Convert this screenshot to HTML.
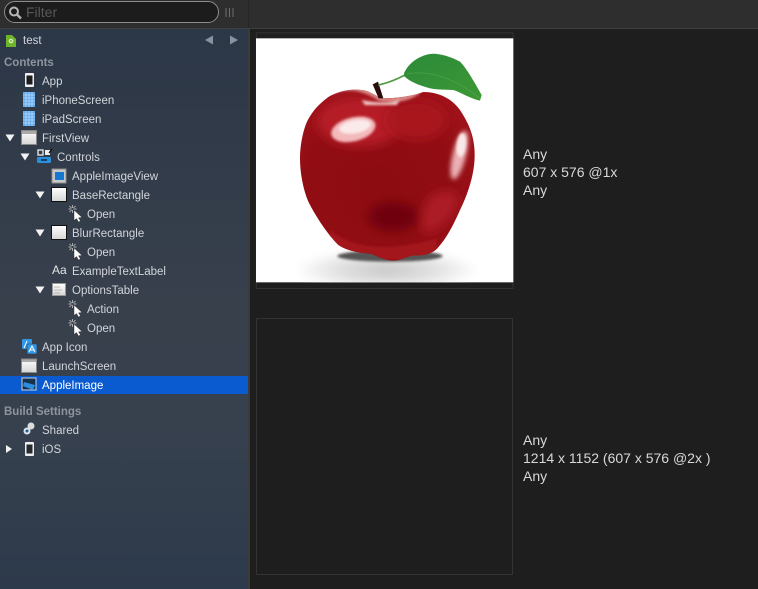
<!DOCTYPE html>
<html><head><meta charset="utf-8"><style>
html,body{margin:0;padding:0;background:#1e1e1e}
#p{position:relative;width:758px;height:589px;overflow:hidden;background:#1e1e1e;font-family:"Liberation Sans",sans-serif}
#p>*{position:absolute}
.l{font-size:11.5px;line-height:19px;height:19px;margin-top:1px;color:#d2d5da;white-space:nowrap}
.h{font-size:11.5px;font-weight:bold;line-height:16px;margin-top:1px;color:#8d949d;white-space:nowrap;left:4px}
.t{font-size:14px;line-height:18px;color:#d8d8d8;left:523px;white-space:nowrap}
</style></head><body><div id="p">
<div style="left:0;top:29px;width:248px;height:560px;background:linear-gradient(#2c3747,#38404c 50%,#37414e 70%,#2d3a4b)"></div>
<div style="left:248px;top:29px;width:2px;height:560px;background:#3b3b3b"></div>
<div style="left:0;top:0;width:758px;height:28px;background:#2e2e2e"></div>
<div style="left:0;top:28px;width:758px;height:1px;background:#3c3f44"></div>
<div style="left:248px;top:0;width:1px;height:28px;background:#262626"></div>
<div style="left:4px;top:1px;width:213px;height:20px;border:1.5px solid #8c8c8c;border-radius:11px;background:#1c1c1c"></div>
<div style="left:26px;top:3px;font-size:14px;line-height:18px;color:#585858">Filter</div>
<div style="left:0;top:376px;width:248px;height:18px;background:#0a5bd0"></div>

<div class="l" style="left:23px;top:31px">test</div>
<div class="h" style="top:54px">Contents</div>
<div class="l" style="left:42px;top:72px">App</div>
<div class="l" style="left:42px;top:91px">iPhoneScreen</div>
<div class="l" style="left:42px;top:110px">iPadScreen</div>
<div class="l" style="left:42px;top:129px">FirstView</div>
<div class="l" style="left:57px;top:148px">Controls</div>
<div class="l" style="left:72px;top:167px">AppleImageView</div>
<div class="l" style="left:72px;top:186px">BaseRectangle</div>
<div class="l" style="left:87px;top:205px">Open</div>
<div class="l" style="left:72px;top:224px">BlurRectangle</div>
<div class="l" style="left:87px;top:243px">Open</div>
<div class="l" style="left:72px;top:262px">ExampleTextLabel</div>
<div class="l" style="left:72px;top:281px">OptionsTable</div>
<div class="l" style="left:87px;top:300px">Action</div>
<div class="l" style="left:87px;top:319px">Open</div>
<div class="l" style="left:42px;top:338px">App Icon</div>
<div class="l" style="left:42px;top:357px">LaunchScreen</div>
<div class="l" style="left:42px;top:376px;color:#fff">AppleImage</div>
<div class="h" style="top:403px">Build Settings</div>
<div class="l" style="left:42px;top:421px">Shared</div>
<div class="l" style="left:42px;top:440px">iOS</div>
<div style="left:52px;top:261px;font-size:12px;line-height:18px;color:#e4e4e4">Aa</div>

<svg width="250" height="470" viewBox="0 0 250 470" style="left:0;top:0">
<defs><g id="cur"><g stroke="#d8d8d8" stroke-width=".7"><path d="M0-4V-1M0 4V1M-4 0H-1M4 0H1M-3-3L-1-1M3-3L1-1M-3 3L-1 1"/></g><path d="M1.500 1L1.500 11.500L4 9.500L6 13L8 12L6 8.800L9.500 8.500Z" fill="#fff" stroke="#222" stroke-width=".4"/></g>
<linearGradient id="w" x1="0" y1="0" x2="0" y2="1"><stop offset="0" stop-color="#fff"/><stop offset="1" stop-color="#d5d5d5"/></linearGradient>
<g id="tri"><path d="M-4.500-3.500H4.500L0 3.500Z" fill="#f2f2f2"/></g></defs>
<circle cx="14" cy="11.500" r="4" fill="none" stroke="#b5b5b5" stroke-width="2"/>
<path d="M17 14.500L21 18.500" stroke="#b5b5b5" stroke-width="2.400"/>
<path d="M226 8V17M229.500 8V17M233 8V17" stroke="#6f6f6f" stroke-width="1"/>
<path d="M6 35H12L16 39V47H6Z" fill="#6fb52c"/><circle cx="11" cy="41" r="2.300" fill="#d8ecc0"/><circle cx="11" cy="41" r="1" fill="#6fb52c"/>
<path d="M213 35.500V44.500L205 40Z" fill="#8a93a0"/><path d="M230 35.500V44.500L238 40Z" fill="#8a93a0"/>
<rect x="25" y="73" width="9" height="14" rx="1" fill="#f0f0f0"/><rect x="26.500" y="75.500" width="6" height="9" fill="#1d1d1d"/>
<g fill="#5ea9ee"><rect x="23" y="92" width="12" height="15"/><rect x="23" y="111" width="12" height="15"/></g>
<path d="M26 92V107M29 92V107M32 92V107M23 95H35M23 98H35M23 101H35M23 104H35M26 111V126M29 111V126M32 111V126M23 114H35M23 117H35M23 120H35M23 123H35" stroke="#b6d8f8" stroke-width=".8"/>
<use href="#tri" x="10" y="138"/><use href="#tri" x="25" y="157"/><use href="#tri" x="40" y="195"/><use href="#tri" x="40" y="233"/><use href="#tri" x="40" y="290"/>
<rect x="21.500" y="130.500" width="15" height="14" fill="url(#w)" stroke="#888"/><rect x="22" y="131" width="14" height="3" fill="#aaa"/>
<rect x="38" y="150" width="5" height="5" fill="none" stroke="#eee" stroke-width="1.300"/><rect x="45" y="150" width="5" height="5" fill="#eee"/><path d="M49 153L52 149" stroke="#111" stroke-width="1.300"/>
<rect x="37" y="157" width="14" height="6" rx="1" fill="#2a8fd8"/><path d="M41 160H47" stroke="#0c2f55" stroke-width="1.600"/>
<rect x="52" y="169" width="14" height="14" fill="#c8c8c8" stroke="#8c8c8c"/><rect x="55" y="172" width="9" height="8" fill="#1278d2"/>
<rect x="51.500" y="187.500" width="15" height="14" fill="url(#w)" stroke="#111"/><rect x="51.500" y="225.500" width="15" height="14" fill="url(#w)" stroke="#111"/>
<rect x="52.500" y="283.500" width="13" height="12" fill="url(#w)" stroke="#999"/><path d="M54 287H60M54 290H62M54 293H60" stroke="#aaa" stroke-width=".8"/>
<use href="#cur" x="72.500" y="209"/><use href="#cur" x="72.500" y="247"/><use href="#cur" x="72.500" y="304"/><use href="#cur" x="72.500" y="323"/>
<rect x="22" y="339" width="10" height="10" rx="1" fill="#2f97e6"/><rect x="27" y="344" width="10" height="10" rx="1" fill="#2f97e6" stroke="#2f3a47" stroke-width=".6"/>
<path d="M24 348L27 341M29 352L32 346L35 352M30 350H34" stroke="#fff" stroke-width="1" fill="none"/>
<rect x="21.500" y="359" width="15" height="13.500" fill="url(#w)" stroke="#888"/><rect x="22" y="359.500" width="14" height="2.500" fill="#aaa"/>
<rect x="22" y="378" width="14" height="12" fill="#17324f" stroke="#c8d4e0"/><path d="M24 382L35 385L33 390L23 386Z" fill="#2d8ee0"/>
<circle cx="31" cy="426" r="3.500" fill="#dcdcdc"/><circle cx="27" cy="431" r="3.500" fill="#dde4ea"/><circle cx="27" cy="431" r="1.500" fill="#1c5f98"/>
<path d="M6 445V453L12 449Z" fill="#f2f2f2"/>
<rect x="25" y="442" width="9" height="14" rx="1" fill="#eee"/><rect x="26.500" y="444.500" width="6" height="9" fill="#26292d"/>
</svg>

<svg width="270" height="265" viewBox="0 0 810 795" style="left:250px;top:30px">
<defs>
<radialGradient id="a" cx=".45" cy=".55" r=".7"><stop offset="0" stop-color="#8c0c12"/><stop offset=".6" stop-color="#910d13"/><stop offset="1" stop-color="#a5141d"/></radialGradient>
<radialGradient id="s"><stop offset="0" stop-color="#c8c8c8"/><stop offset=".6" stop-color="#e4e4e4"/><stop offset="1" stop-color="#fff"/></radialGradient>
<filter id="b1" x="-50%" y="-50%" width="200%" height="200%"><feGaussianBlur stdDeviation="16"/></filter>
<filter id="b2" x="-50%" y="-50%" width="200%" height="200%"><feGaussianBlur stdDeviation="12"/></filter>
<filter id="b3" x="-30%" y="-30%" width="160%" height="160%"><feGaussianBlur stdDeviation="4"/></filter>
<filter id="b4" x="-50%" y="-50%" width="200%" height="200%"><feGaussianBlur stdDeviation="7"/></filter>
<linearGradient id="lf" x1="0" y1="0" x2="1" y2="1"><stop offset="0" stop-color="#2c8a3a"/><stop offset="1" stop-color="#3d9834"/></linearGradient>
<clipPath id="wc"><rect x="18" y="25" width="772" height="732"/></clipPath>
<clipPath id="ac"><path d="M230 205C255 185 310 172 350 183C370 190 385 203 400 205C440 205 480 200 520 186C565 186 605 205 630 240C660 285 674 325 674 375C674 430 655 490 630 540C610 585 590 625 562 655C545 672 520 678 490 676C470 680 450 692 430 692C405 692 385 680 365 672C330 668 295 665 265 645C235 615 200 565 175 515C160 480 150 430 150 385C150 345 160 290 178 262C192 238 210 220 230 205Z"/></clipPath>
</defs>
<rect x="19" y="8.500" width="770" height="767" fill="none" stroke="#333" stroke-width="3"/>
<rect x="18" y="25" width="772" height="732" fill="#fff"/>
<g clip-path="url(#wc)">
<ellipse cx="410" cy="720" rx="275" ry="65" fill="url(#s)" filter="url(#b2)"/>
<ellipse cx="420" cy="678" rx="158" ry="17" fill="#555" filter="url(#b3)"/>
</g>
<path d="M230 205C255 185 310 172 350 183C370 190 385 203 400 205C440 205 480 200 520 186C565 186 605 205 630 240C660 285 674 325 674 375C674 430 655 490 630 540C610 585 590 625 562 655C545 672 520 678 490 676C470 680 450 692 430 692C405 692 385 680 365 672C330 668 295 665 265 645C235 615 200 565 175 515C160 480 150 430 150 385C150 345 160 290 178 262C192 238 210 220 230 205Z" fill="url(#a)"/>
<g clip-path="url(#ac)">
<ellipse cx="330" cy="275" rx="130" ry="75" fill="#b51c28" filter="url(#b1)"/>
<ellipse cx="500" cy="270" rx="90" ry="60" fill="#a9141e" filter="url(#b1)"/>
<path d="M240 195C290 172 340 180 385 212C440 222 480 212 510 190L500 170H250Z" fill="#d88886" filter="url(#b3)"/>
<path d="M335 210C370 218 420 222 450 208L440 225H345Z" fill="#f0ccca" filter="url(#b3)"/>
<path d="M400 182C430 174 470 178 495 187C470 200 430 205 405 205Z" fill="#dc5d52" filter="url(#b3)"/>
<ellipse cx="430" cy="560" rx="75" ry="45" fill="#70060b" filter="url(#b1)"/>
<path d="M540 500C590 470 625 480 625 520C600 570 560 610 520 610C510 570 520 530 540 500Z" fill="#ad1e28" filter="url(#b1)"/>
<path d="M240 600C300 650 400 670 560 625L560 690H240Z" fill="#a3141c" filter="url(#b3)"/>
<ellipse cx="310" cy="298" rx="68" ry="36" transform="rotate(-14 310 298)" fill="#f3b9bb" filter="url(#b3)"/>
<ellipse cx="315" cy="290" rx="48" ry="20" transform="rotate(-10 315 290)" fill="#fbeaea" filter="url(#b3)"/>
<ellipse cx="628" cy="375" rx="20" ry="75" transform="rotate(14 628 375)" fill="#ecb0b4" filter="url(#b4)"/>
<ellipse cx="634" cy="345" rx="14" ry="36" transform="rotate(6 634 345)" fill="#fae8e8" filter="url(#b3)"/>
</g>
<path d="M368 163L384 155L400 205H386Z" fill="#2a0c0c"/>
<path d="M385 165C410 160 440 148 465 135" fill="none" stroke="#4f9a40" stroke-width="5"/>
<path d="M462 130C475 100 505 78 540 72C560 68 600 78 630 95C650 115 675 160 695 195L690 212C665 208 635 188 610 180C585 178 555 180 530 172C505 165 480 155 462 138Z" fill="url(#lf)"/>
<path d="M470 132C530 120 610 140 690 205" fill="none" stroke="#63ad5a" stroke-width="2" opacity=".6"/>
</svg>
<div style="left:256px;top:318px;width:255px;height:255px;border:1px solid #333"></div>
<div class="t" style="top:145px">Any<br>607 x 576 @1x<br>Any</div>
<div class="t" style="top:431px">Any<br>1214 x 1152 (607 x 576 @2x )<br>Any</div>
</div></body></html>
